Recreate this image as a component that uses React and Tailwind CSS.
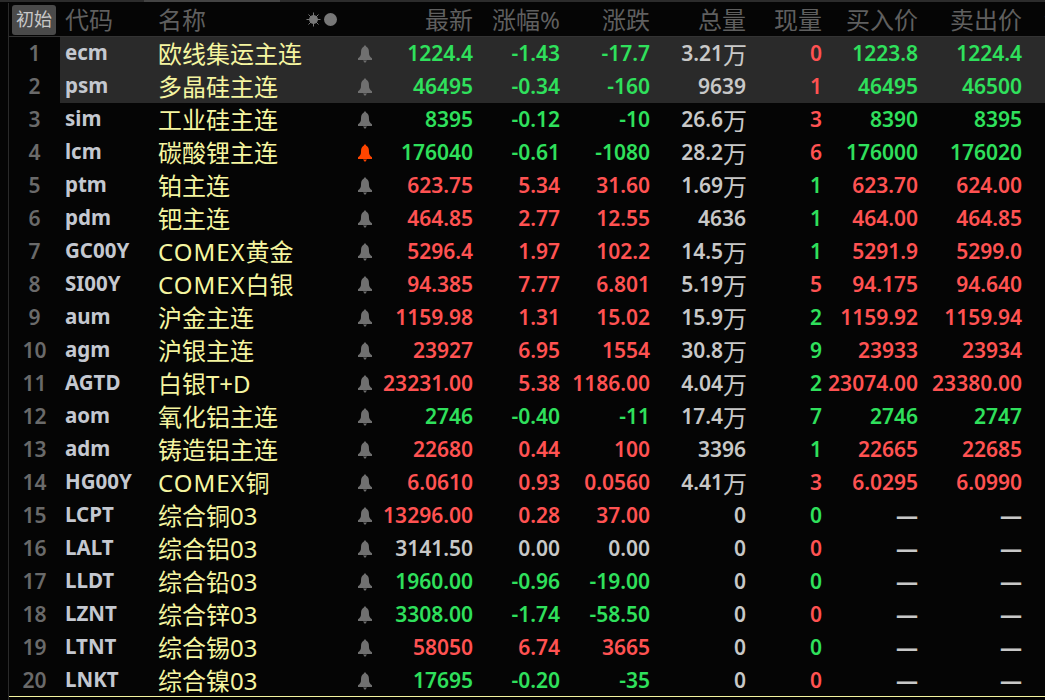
const RED = 'text-[#ff5252]';
const GREEN = 'text-[#2fe05c]';
const GRAY = 'text-[#c8c8c8]';

const rows = [
  ['ecm', '欧线集运主连', '1224.4', '-1.43', '-17.7', '3.21', '万', '0', '1223.8', '1224.4', GREEN, RED],
  ['psm', '多晶硅主连', '46495', '-0.34', '-160', '9639', '', '1', '46495', '46500', GREEN, RED],
  ['sim', '工业硅主连', '8395', '-0.12', '-10', '26.6', '万', '3', '8390', '8395', GREEN, RED],
  ['lcm', '碳酸锂主连', '176040', '-0.61', '-1080', '28.2', '万', '6', '176000', '176020', GREEN, RED],
  ['ptm', '铂主连', '623.75', '5.34', '31.60', '1.69', '万', '1', '623.70', '624.00', RED, GREEN],
  ['pdm', '钯主连', '464.85', '2.77', '12.55', '4636', '', '1', '464.00', '464.85', RED, GREEN],
  ['GC00Y', 'COMEX黄金', '5296.4', '1.97', '102.2', '14.5', '万', '1', '5291.9', '5299.0', RED, GREEN],
  ['SI00Y', 'COMEX白银', '94.385', '7.77', '6.801', '5.19', '万', '5', '94.175', '94.640', RED, RED],
  ['aum', '沪金主连', '1159.98', '1.31', '15.02', '15.9', '万', '2', '1159.92', '1159.94', RED, GREEN],
  ['agm', '沪银主连', '23927', '6.95', '1554', '30.8', '万', '9', '23933', '23934', RED, GREEN],
  ['AGTD', '白银T+D', '23231.00', '5.38', '1186.00', '4.04', '万', '2', '23074.00', '23380.00', RED, GREEN],
  ['aom', '氧化铝主连', '2746', '-0.40', '-11', '17.4', '万', '7', '2746', '2747', GREEN, GREEN],
  ['adm', '铸造铝主连', '22680', '0.44', '100', '3396', '', '1', '22665', '22685', RED, GREEN],
  ['HG00Y', 'COMEX铜', '6.0610', '0.93', '0.0560', '4.41', '万', '3', '6.0295', '6.0990', RED, RED],
  ['LCPT', '综合铜03', '13296.00', '0.28', '37.00', '0', '', '0', '—', '—', RED, GREEN],
  ['LALT', '综合铝03', '3141.50', '0.00', '0.00', '0', '', '0', '—', '—', GRAY, RED],
  ['LLDT', '综合铅03', '1960.00', '-0.96', '-19.00', '0', '', '0', '—', '—', GREEN, GREEN],
  ['LZNT', '综合锌03', '3308.00', '-1.74', '-58.50', '0', '', '0', '—', '—', GREEN, RED],
  ['LTNT', '综合锡03', '58050', '6.74', '3665', '0', '', '0', '—', '—', RED, GREEN],
  ['LNKT', '综合镍03', '17695', '-0.20', '-35', '0', '', '0', '—', '—', GREEN, RED],
];

const COLS = 'grid grid-cols-[98px_218px_97px_87px_90px_96px_76px_96px_104px_23px]';

function BellIcon({ className }) {
  return (
    <svg width="14" height="18" viewBox="0 0 14 18" fill="currentColor" className={className}>
      <path d="M7 0 L8.4 1.8 C10.4 2.8 11 5 11 8 C11 10.5 12 12 14 13.2 L14 15 L0 15 L0 13.2 C2 12 3 10.5 3 8 C3 5 3.6 2.8 5.6 1.8 Z" />
      <path d="M5 15.5 H9 L7 18 Z" />
    </svg>
  );
}

function SunIcon() {
  return (
    <svg width="15" height="15" viewBox="0 0 15 15" fill="#777" stroke="#777">
      <circle cx="7.5" cy="7.5" r="4" />
      <path d="M7.5 0.5 V14.5 M0.5 7.5 H14.5 M2.5 2.5 L12.5 12.5 M12.5 2.5 L2.5 12.5" strokeWidth="1" />
    </svg>
  );
}

function Row({ row, index }) {
  const [code, name, last, pct, chg, vol, unit, now, bid, ask, color, nowColor] = row;
  const dash = bid === '—';
  const comex = name.startsWith('COMEX');
  return (
    <div className="flex h-[33px] text-[21px] leading-[33px] whitespace-nowrap">
      <span className="w-[51px] text-center text-[#6a6a6a] font-semibold">{index + 1}</span>
      <div className={`${COLS} flex-1 items-center h-full ${index < 2 ? 'bg-[#2a2a2a]' : ''}`}>
        <span className="pl-[5px] text-[20.5px] leading-[31px] h-[33px] font-bold text-[#c4c8d0]">{code}</span>
        <span className="h-[33px] flex items-center justify-between pr-[4px] text-[24px] font-normal text-[#f5f5a0]">
          <span>
            {comex ? <span className="tracking-[1px]">COMEX</span> : null}
            {comex ? name.slice(5) : name}
          </span>
          <BellIcon className={code === 'lcm' ? 'text-[#ff4500]' : 'text-[#707070]'} />
        </span>
        <span className={`text-right ${color}`}>{last}</span>
        <span className={`text-right ${color}`}>{pct}</span>
        <span className={`text-right ${color}`}>{chg}</span>
        <span className={`h-[33px] flex items-center justify-end ${GRAY}`}>
          {vol}
          {unit && <span className="text-[24px] font-normal -mr-[1px] mt-[2px]">{unit}</span>}
        </span>
        <span className={`text-right ${nowColor}`}>{now}</span>
        <span className={`text-right ${dash ? `${GRAY} text-[22px] font-bold` : color}`}>{bid}</span>
        <span className={`text-right ${dash ? `${GRAY} text-[22px] font-bold` : color}`}>{ask}</span>
      </div>
    </div>
  );
}

export default function App() {
  return (
    <div className="w-[1045px] h-[700px] overflow-hidden bg-[#050505] font-['Noto_Sans','Noto_Sans_CJK_SC',sans-serif] font-semibold">
      <div className="flex h-[3px] border-b border-[#050505]">
        <div className="w-[144px] bg-[#2c2c2c]" />
        <div className="w-[136px] bg-[#444]" />
        <div className="flex-1 bg-[#2c2c2c]" />
      </div>
      <div className="ml-[8px] border-l border-[#2a2a2a] h-[697px]">
        <div className="flex h-[34px] items-center border-b border-[#333]">
          <div className="w-[51px] shrink-0">
            <span className="ml-[3px] w-[44px] h-[30px] bg-[#4a4a4a] rounded-[3px] text-[#c8c8c8] text-[18px] font-normal flex items-center justify-center">初始</span>
          </div>
          <div className={`${COLS} flex-1 items-center text-[24px] font-normal text-[#5f5f5f] whitespace-nowrap overflow-hidden`}>
            <span className="pl-[5px]">代码</span>
            <span className="flex items-center justify-between pr-[39px]">
              名称
              <span className="flex items-center gap-[3px]">
                <SunIcon />
                <span className="w-[13px] h-[13px] rounded-full bg-[#777]" />
              </span>
            </span>
            <span className="text-right">最新</span>
            <span className="text-right">涨幅%</span>
            <span className="text-right">涨跌</span>
            <span className="text-right">总量</span>
            <span className="text-right">现量</span>
            <span className="text-right">买入价</span>
            <span className="text-right">卖出价</span>
            <span className="pl-[22px]">涨</span>
          </div>
        </div>
        <div className="h-[660px] border-b border-[#f5f5a0]">
          {rows.map((row, i) => (
            <Row key={row[0]} row={row} index={i} />
          ))}
        </div>
      </div>
    </div>
  );
}
